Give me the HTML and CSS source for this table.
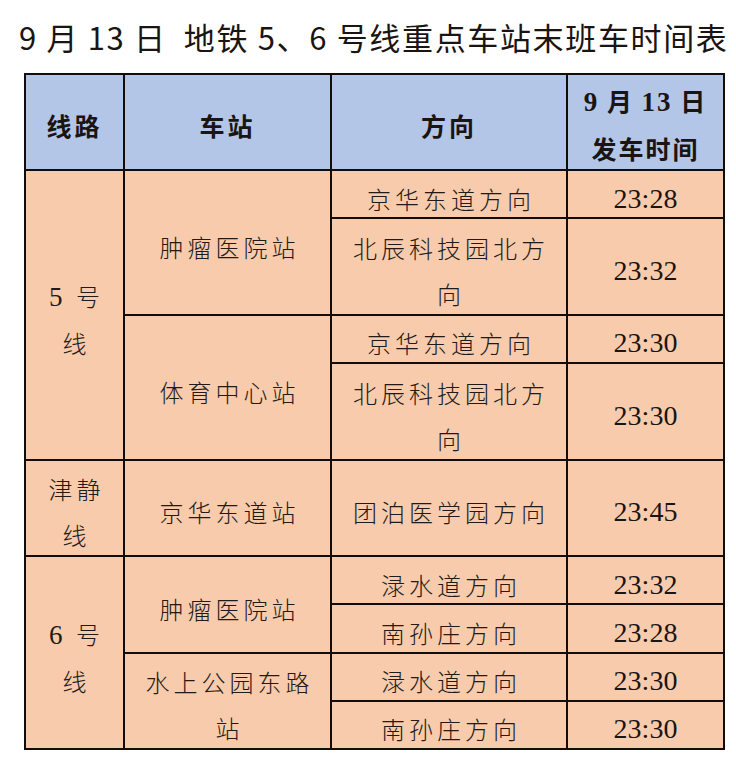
FILE: index.html
```html
<!DOCTYPE html>
<html lang="zh-CN">
<head>
<meta charset="utf-8">
<title>9 月 13 日 地铁 5、6 号线重点车站末班车时间表</title>
<link rel="stylesheet" href="styles.css">
</head>
<body>
<h1 class="title">9 月 13 日&nbsp; 地铁 5、6 号线重点车站末班车时间表</h1>
<div class="sheet">
  <div class="cell head single"><p class="in">线路</p></div>
  <div class="cell head single"><p class="in">车站</p></div>
  <div class="cell head single"><p class="in">方向</p></div>
  <div class="cell head date"><p class="in"><span class="num">9</span> 月 <span class="num">13</span> 日<br>发车时间</p></div>

  <div class="cell txt line" style="grid-row: span 6"><p class="in"><span class="num">5</span> <span>号</span><br><span>线</span></p></div>
  <div class="cell txt" style="grid-row: span 3"><p class="in">肿瘤医院站</p></div>
  <div class="cell txt"><p class="in">京华东道方向</p></div>
  <div class="cell time"><p class="in">23:28</p></div>
  <div class="cell txt" style="grid-row: span 2"><p class="in">北辰科技园北方向</p></div>
  <div class="cell time" style="grid-row: span 2"><p class="in">23:32</p></div>

  <div class="cell txt" style="grid-row: span 3"><p class="in">体育中心站</p></div>
  <div class="cell txt"><p class="in">京华东道方向</p></div>
  <div class="cell time"><p class="in">23:30</p></div>
  <div class="cell txt" style="grid-row: span 2"><p class="in">北辰科技园北方向</p></div>
  <div class="cell time" style="grid-row: span 2"><p class="in">23:30</p></div>

  <div class="cell txt line" style="grid-row: span 2"><p class="in">津静线</p></div>
  <div class="cell txt" style="grid-row: span 2"><p class="in">京华东道站</p></div>
  <div class="cell txt" style="grid-row: span 2"><p class="in">团泊医学园方向</p></div>
  <div class="cell time" style="grid-row: span 2"><p class="in">23:45</p></div>

  <div class="cell txt line" style="grid-row: span 4"><p class="in"><span class="num">6</span> <span>号</span><br><span>线</span></p></div>
  <div class="cell txt" style="grid-row: span 2"><p class="in">肿瘤医院站</p></div>
  <div class="cell txt"><p class="in">渌水道方向</p></div>
  <div class="cell time"><p class="in">23:32</p></div>
  <div class="cell txt"><p class="in">南孙庄方向</p></div>
  <div class="cell time"><p class="in">23:28</p></div>
  <div class="cell txt" style="grid-row: span 2"><p class="in">水上公园东路站</p></div>
  <div class="cell txt"><p class="in">渌水道方向</p></div>
  <div class="cell time"><p class="in">23:30</p></div>
  <div class="cell txt"><p class="in">南孙庄方向</p></div>
  <div class="cell time"><p class="in">23:30</p></div>
</div>
</body>
</html>
```
FILE: styles.css
```css
html, body {
  margin: 0;
  padding: 0;
  background: #ffffff;
}
body {
  width: 736px;
  height: 765px;
  overflow: hidden;
  color: #1a1412;
}
.title {
  margin: 0;
  height: 73px;
  line-height: 73px;
  padding-left: 19px;
  font-family: "Noto Sans CJK SC", sans-serif;
  font-weight: 400;
  font-size: 31px;
  letter-spacing: 1.65px;
  white-space: nowrap;
}
.sheet {
  margin-left: 24px;
  width: 699px;
  display: grid;
  grid-template-columns: 99px 207px 236px 157px;
  grid-template-rows: 96px repeat(12, 48.25px);
  border-top: 2px solid #140c08;
  border-left: 2px solid #140c08;
  background: #f8cbad;
}
.cell {
  border-right: 2px solid #140c08;
  border-bottom: 2px solid #140c08;
  display: flex;
  align-items: center;
  justify-content: center;
  text-align: center;
  box-sizing: border-box;
  font-family: "Noto Sans CJK SC", sans-serif;
}
.in {
  margin: 0;
}
.num,
.time {
  font-family: "Liberation Serif", "Times New Roman", Tinos, serif;
}
.head {
  background: #b4c6e7;
  font-weight: 700;
  font-size: 25px;
  letter-spacing: 3px;
  line-height: 46px;
  padding-top: 4px;
}
.head.single {
  padding-top: 6px;
}
.date {
  letter-spacing: 2px;
}
.date .num {
  font-size: 27px;
}
.txt {
  font-size: 24px;
  font-weight: 300;
  color: #221a17;
  letter-spacing: 4px;
  line-height: 46px;
  padding: 9px 8px 0 12px;
}
.line {
  padding: 9px 12px 0 16px;
}
.line .num {
  font-size: 27px;
}
.time {
  font-size: 28px;
  padding-top: 9px;
}
```
